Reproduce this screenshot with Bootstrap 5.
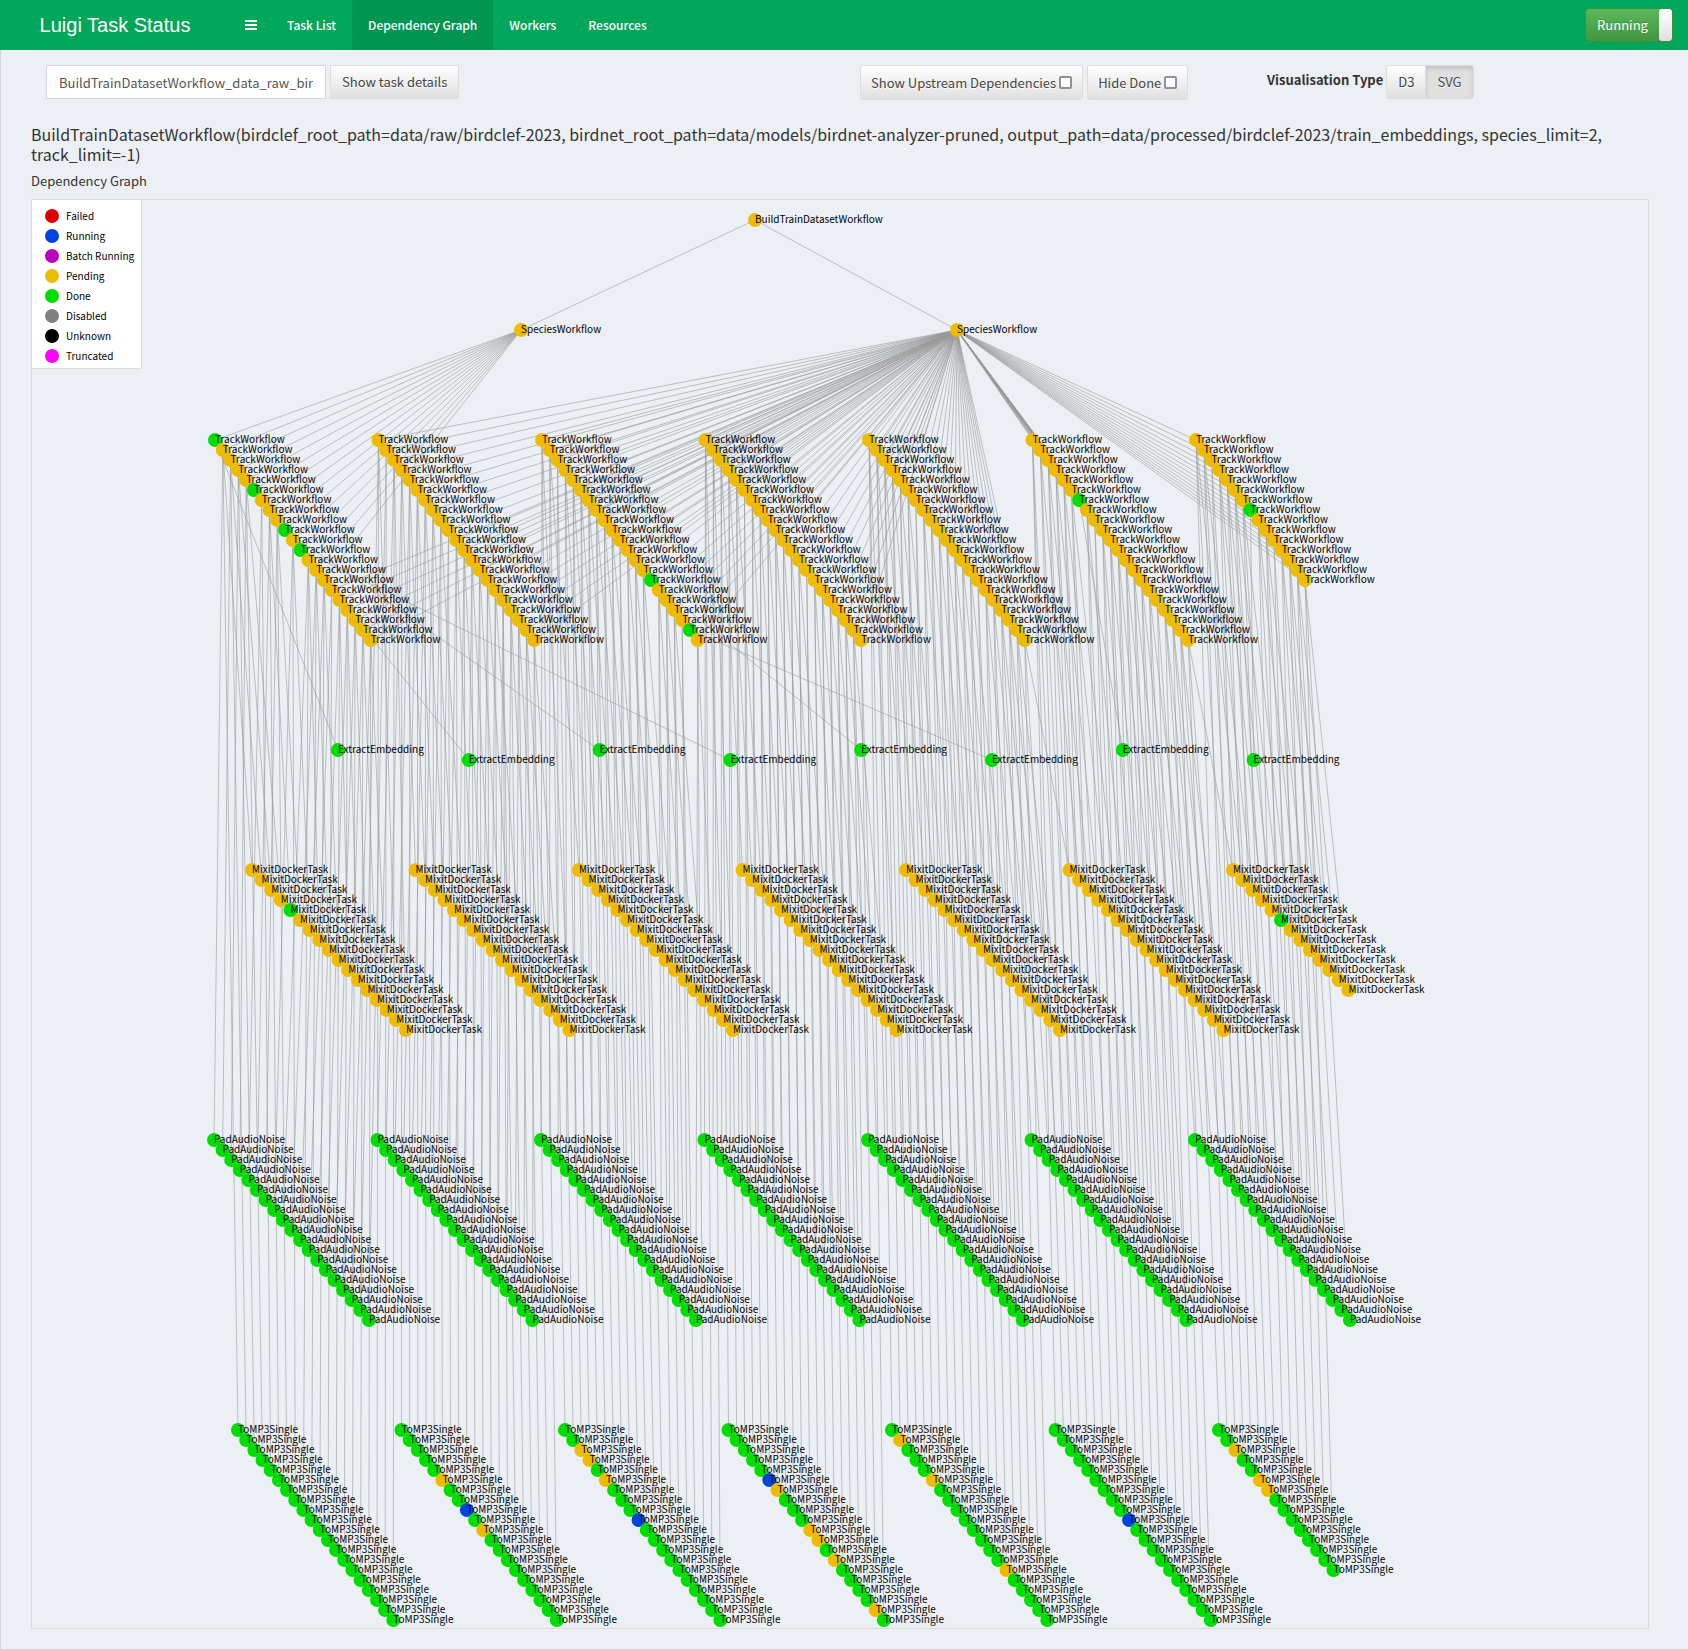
<!DOCTYPE html>
<html lang="en">
<head>
<meta charset="utf-8">
<meta name="viewport" content="width=device-width, initial-scale=1">
<title>Luigi Task Status</title>
<link rel="stylesheet" href="https://cdn.jsdelivr.net/npm/bootstrap@5.3.0/dist/css/bootstrap.min.css">
<style>
  body { background: #ecf0f5; color: #333; font-family: "Noto Sans CJK SC", "Noto Sans", sans-serif; font-size: 13px; line-height: 20px; }
  .topbar { background: #00a65a; height: 50px; }
  .brand-box { width: 230px; font: 20px/50px "Liberation Sans", Arial, sans-serif; }
  .brand-box, .topbar .nav-link { color: #fff; }
  .topbar .nav-link { padding: 15px 16px; font-size: 12px; font-weight: 500; line-height: 20px; }
  .topbar .nav-link.active { background: #009551; }
  .menu-btn { background: none; border: 0; padding: 0 14px 0 15px; display: flex; align-items: center; }
  .run-switch { margin-right: 15px; height: 34px; width: 88px; padding: 0; border: 1px solid #3e8f3e; border-radius: 4px; overflow: hidden; color: #fff; background: linear-gradient(#5cb85c, #419641); text-shadow: 0 -1px 0 rgba(0,0,0,.2); }
  .run-knob { width: 13px; background: linear-gradient(#fff, #e0e0e0); border-radius: 3px; }
  .page-body { border-left: 1px solid #d2d6de; padding: 15px 29px 20px 30px; min-height: calc(100vh - 50px); }
  .tool-row { --bs-gutter-x: 30px; margin: 0; }
  .task-input { width: 280px; height: 34px; font-size: 13px; color: #555; border: 1px solid #d2d6de; border-radius: 0; padding: 6px 12px; }
  .btn-soft { --bs-btn-font-size: 13px; --bs-btn-line-height: 20px; --bs-btn-color: #444; --bs-btn-border-color: #ddd; --bs-btn-border-radius: 3px; padding: 6px 11px; background: linear-gradient(#fff, #e0e0e0); text-shadow: 0 1px 0 #fff; }
  .btn-check:checked + .btn-soft { background: #e0e0e0; color: #444; border-color: #dbdbdb; box-shadow: inset 0 3px 5px rgba(0,0,0,.125); }
  .btn-tick { padding: 7px 10px 6px; }
  .btn-tick input { width: 13px; height: 13px; margin: 0 0 0 3px; vertical-align: -1px; appearance: none; background: #fff; border: 2px solid #8f8f9d; border-radius: 2px; }
  .vis-label { padding-top: 5px; margin-right: 3px; }
  .task-title { font-size: 16px; line-height: 20px; margin: 24px 0 7px; font-weight: 400; }
  .graph-box { margin: 8px 10px 0 0; border: 1px solid #ddd; }
  .graph-box > svg { display: block; width: 100%; height: 1428px; }
  .graph-box text { font-size: 10px; fill: #000; }
  .edge-lines line { stroke: #999; stroke-opacity: .6; stroke-width: 1px; }
  .legend-box { position: absolute; top: 0; left: 0; width: 110px; background: #fff; border: 1px solid #ddd; border-width: 0 1px 1px 0; padding: 6px 0 2px 13px; font-size: 10px; line-height: 20px; color: #000; }
  .legend-box li { display: flex; align-items: center; gap: 7px; white-space: nowrap; }
  .legend-dot { width: 14px; height: 14px; border-radius: 50%; flex: none; }
  .dot-failed { background: #d00; } .dot-running { background: #04d; } .dot-batch { background: #b0b; } .dot-pending { background: #eb0; }
  .dot-done { background: #0d0; } .dot-disabled { background: gray; } .dot-unknown { background: #000; } .dot-truncated { background: #f0f; }
</style>
</head>
<body>
<header class="topbar d-flex">
  <div class="brand-box text-center">Luigi Task Status</div>
  <button class="menu-btn" type="button" aria-label="Toggle navigation">
    <svg width="12" height="10" fill="#fff"><path d="M0 0h12v2H0zM0 4h12v2H0zM0 8h12v2H0z"/></svg>
  </button>
  <nav class="nav me-auto">
    <a class="nav-link" href="#tasks">Task List</a>
    <a class="nav-link active" href="#graph" aria-current="page">Dependency Graph</a>
    <a class="nav-link" href="#workers">Workers</a>
    <a class="nav-link" href="#resources">Resources</a>
  </nav>
  <button class="run-switch d-flex align-self-center" type="button" role="switch" aria-checked="true">
    <span class="flex-grow-1 align-self-center">Running</span><span class="run-knob align-self-stretch"></span>
  </button>
</header>

<main class="page-body">
  <form class="row tool-row">
    <div class="col-6 d-flex gap-1 align-items-start">
      <input class="task-input" type="text" aria-label="Task id" value="BuildTrainDatasetWorkflow_data_raw_birdclef_2023">
      <button class="btn btn-soft rounded-0" type="button">Show task details</button>
    </div>
    <div class="col-3 d-flex gap-1 align-items-start">
      <label class="btn btn-soft btn-tick">Show Upstream Dependencies<input type="checkbox"></label>
      <label class="btn btn-soft btn-tick">Hide Done<input type="checkbox"></label>
    </div>
    <div class="col-3 d-flex align-items-start">
      <span class="fw-bold vis-label" id="vis-label">Visualisation Type</span>
      <div class="btn-group" role="group" aria-labelledby="vis-label">
        <input class="btn-check" type="radio" name="vis" id="vis-d3"><label class="btn btn-soft" for="vis-d3">D3</label>
        <input class="btn-check" type="radio" name="vis" id="vis-svg" checked><label class="btn btn-soft" for="vis-svg">SVG</label>
      </div>
    </div>
  </form>

  <h1 class="task-title">BuildTrainDatasetWorkflow(birdclef_root_path=data/raw/birdclef-2023, birdnet_root_path=data/models/birdnet-analyzer-pruned, output_path=data/processed/birdclef-2023/train_embeddings, species_limit=2, track_limit=-1)</h1>
  <div>Dependency Graph</div>
  <div class="graph-box position-relative">
    <svg id="graph" role="img" aria-label="Dependency graph"></svg>
    <ul class="legend-box list-unstyled mb-0">
      <li><span class="legend-dot dot-failed"></span>Failed</li>
      <li><span class="legend-dot dot-running"></span>Running</li>
      <li><span class="legend-dot dot-batch"></span>Batch Running</li>
      <li><span class="legend-dot dot-pending"></span>Pending</li>
      <li><span class="legend-dot dot-done"></span>Done</li>
      <li><span class="legend-dot dot-disabled"></span>Disabled</li>
      <li><span class="legend-dot dot-unknown"></span>Unknown</li>
      <li><span class="legend-dot dot-truncated"></span>Truncated</li>
    </ul>
  </div>
</main>

<script src="https://cdn.jsdelivr.net/npm/bootstrap@5.3.0/dist/js/bootstrap.bundle.min.js"></script>
<script>
  const PENDING = '#eb0', DONE = '#0d0', RUNNING = '#04d';

  // One level of the graph: `per` nodes run down each staggered diagonal.
  function level(name, count, x0, y0, dx, per, base, marks) {
    return Array.from({ length: count }, (_, i) => ({
      name, x: x0 + dx * i, y: y0 + 10 * (i % per), color: (marks && marks[i]) || base
    }));
  }
  function mark(list, color, into = {}) { list.forEach(i => into[i] = color); return into; }

  const column = 163.5;
  const root = level('BuildTrainDatasetWorkflow', 1, 723, 20, 0, 1, PENDING);
  const species = level('SpeciesWorkflow', 2, 489, 130, 436, 1, PENDING);
  const tracks = level('TrackWorkflow', 141, 183, 240, column / 21, 21, PENDING,
    mark([0, 5, 9, 11, 56, 61, 111, 133], DONE));
  const extracts = level('ExtractEmbedding', 8, 306, 550, 130.8, 2, DONE);
  extracts.forEach((e, i) => e.y = i % 2 ? 560 : 550);
  const mixits = level('MixitDockerTask', 115, 220, 670, column / 17, 17, PENDING, mark([4, 107], DONE));
  const pads = level('PadAudioNoise', 133, 182, 940, column / 19, 19, DONE);
  const mp3s = level('ToMP3Single', 135, 206, 1230, column / 20, 20, DONE,
    mark([28, 49, 65, 109], RUNNING, mark([25, 30, 42, 43, 45, 66, 70, 71, 73, 78, 81, 85, 94, 122, 125, 126], PENDING)));

  const edges = [];
  species.forEach(s => edges.push([root[0], s]));
  tracks.forEach((t, i) => edges.push([species[i < 15 ? 0 : 1], t]));
  tracks.filter(t => t.color === DONE).forEach((t, i) => edges.push([t, extracts[i]]));
  const open = tracks.filter(t => t.color === PENDING);
  open.forEach((t, i) => edges.push([t, pads[i]]));
  mixits.forEach((m, i) => edges.push([open[Math.round(i * 132 / 114)], m]));
  mp3s.forEach((m, i) => edges.push([open[Math.round(i * 132 / 134)], m]));

  const nodes = [root, species, tracks, extracts, mixits, pads, mp3s].flat();
  document.getElementById('graph').innerHTML =
    '<g class="edge-lines">' + edges.map(([a, b]) =>
      `<line x1="${a.x}" y1="${a.y}" x2="${b.x}" y2="${b.y}"/>`).join('') + '</g>' +
    nodes.map(n => `<g><circle cx="${n.x}" cy="${n.y}" r="7" fill="${n.color}"/>` +
      `<text x="${n.x}" y="${n.y + 3}">${n.name}</text></g>`).join('');
</script>
</body>
</html>
